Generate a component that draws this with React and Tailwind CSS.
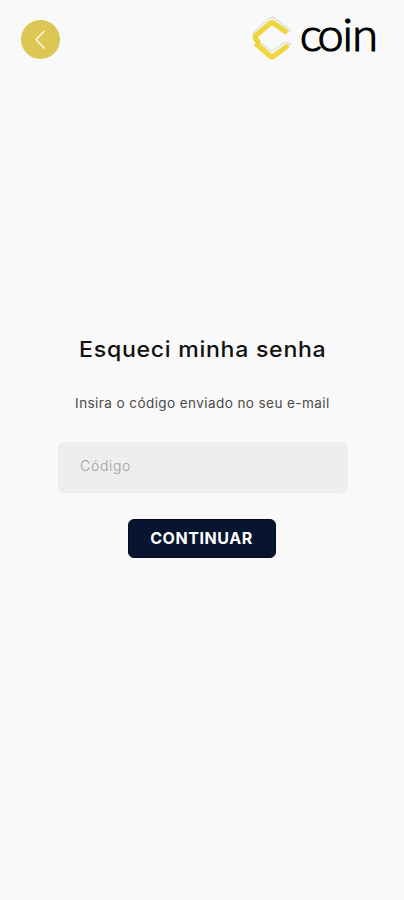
import { useState } from 'react'

// Back button in the top left corner
function BackButton() {
  return (
    <button
      type="button"
      aria-label="Voltar"
      className="flex h-[39px] w-[39px] items-center justify-center rounded-full bg-[#dcc654]"
    >
      <svg width="39" height="39" viewBox="0 0 39 39" fill="none">
        <path
          d="M23 11.5L15 19.5L23 28"
          stroke="#fdf8df"
          strokeWidth="1.7"
          strokeLinecap="round"
          strokeLinejoin="round"
        />
      </svg>
    </button>
  )
}

// Brand symbol + wordmark
function Logo() {
  return (
    <svg width="134" height="70" viewBox="250 0 134 70" role="img" aria-label="coin">
      {/* Silver edges */}
      <path
        d="M253 37L254 32L269.5 18Q272 16 274.5 18L291 30.5L287 33L272 22Z"
        fill="#f6f6f6"
        stroke="#cfcfcf"
        strokeWidth="0.9"
        strokeLinejoin="round"
      />
      <path
        d="M260 42L272 51.5L284 42.5L291 43.5L273 57L257 45Z"
        fill="#f6f6f6"
        stroke="#cfcfcf"
        strokeWidth="0.9"
        strokeLinejoin="round"
      />
      {/* Gold bands */}
      <g fill="none" stroke="#f0d53c" strokeWidth="5.2" strokeLinejoin="round">
        <path d="M259 43L256 39Q254.5 37 256.5 35L270 23.5Q272 22 274 23.5L287 32.5" />
        <path d="M255.5 43L270 56Q272 57.5 274 56L288 45.5" />
      </g>
      <path d="M259 44L254.5 40.5" stroke="#dcb928" strokeWidth="0.9" />
      <text
        x="288.2 305.4 329.4 338.6"
        y="51"
        transform="scale(1.04 1)"
        stroke="#000"
        strokeWidth="1.2"
        className="fill-black font-['Lato',sans-serif] text-[45px] font-light"
      >
        coin
      </text>
    </svg>
  )
}

export default function App() {
  const [code, setCode] = useState('')

  return (
    <div className="flex h-[900px] w-[404px] flex-col bg-[#f9f9f9] font-['Inter',sans-serif]">
      <header className="flex items-start justify-between pr-5 pl-[21px]">
        <div className="pt-5">
          <BackButton />
        </div>
        <Logo />
      </header>

      <main className="flex flex-col items-center pt-[265px]">
        <h1 className="ml-[2px] scale-x-105 text-[22px] leading-7 font-medium tracking-[0.68px] whitespace-nowrap text-[#111]">
          Esqueci minha senha
        </h1>
        <p className="mt-[30px] scale-x-[1.04] text-[13px] leading-5 tracking-[0.4px] whitespace-nowrap text-[#4a4a4a]">
          Insira o código enviado no seu e-mail
        </p>

        <form
          className="mt-[29px] ml-[2px] flex flex-col items-center"
          onSubmit={(e) => e.preventDefault()}
        >
          <input
            value={code}
            onChange={(e) => setCode(e.target.value)}
            placeholder="Código"
            className="h-[51px] w-[290px] rounded-md bg-[#eeeeee] px-[22px] pb-1 text-sm font-light tracking-[0.7px] text-[#333] outline-none placeholder:text-[#a0a0a0]"
          />
          <button
            type="submit"
            className="mt-[26px] mr-[2px] h-[39px] w-[148px] rounded-md border border-[#050a14] bg-[#071530] pr-[1px] pb-[2px] text-base font-bold tracking-[0.55px] text-white"
          >
            CONTINUAR
          </button>
        </form>
      </main>
    </div>
  )
}
